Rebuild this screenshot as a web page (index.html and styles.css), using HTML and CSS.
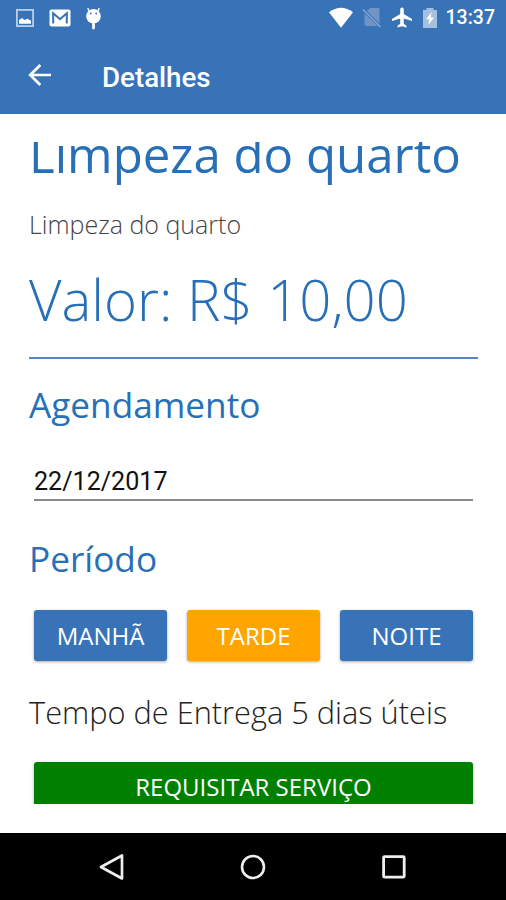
FILE: index.html
```html
<!DOCTYPE html>
<html lang="pt-BR">
<head>
  <meta charset="UTF-8" />
  <meta name="viewport" content="width=device-width, initial-scale=1" />
  <title>Detalhes</title>
  <link rel="stylesheet" href="styles.css">
</head>
<body>
  <header class="header">
    <div class="status-bar">
      <svg class="icon-picture" width="18" height="18" viewBox="0 0 18 18">
        <rect x="0.9" y="0.9" width="16.2" height="16.2" fill="none" stroke="#b9cfe8" stroke-width="1.8" />
        <path d="M3 14.8V11L6 9l2.5 2 3-1.2 3.5 2v3z" fill="#fff" />
      </svg>
      <svg class="icon-mail" width="22" height="18" viewBox="0 0 22 18">
        <rect x="0.5" y="0.5" width="21" height="17" rx="2" fill="#fff" />
        <path d="M4.2 14.5V4.2L11 10.2l6.8-6v10.3" fill="none" stroke="#3873b7" stroke-width="2" />
      </svg>
      <svg class="icon-bug" width="17" height="23" viewBox="0 0 17 23">
        <path d="M4 4L2.8 1M13 4l1.2-3" stroke="#fff" stroke-width="1.4" />
        <circle cx="8.5" cy="9.3" r="7.3" fill="#fff" />
        <path d="M8.5 15v6" stroke="#fff" stroke-width="2.8" stroke-linecap="round" />
        <circle cx="5.8" cy="6.5" r="0.9" fill="#3873b7" />
        <circle cx="11.2" cy="6.5" r="0.9" fill="#3873b7" />
      </svg>
      <div class="spacer"></div>
      <svg class="icon-wifi" width="26" height="22" viewBox="0 0 26 22">
        <path d="M1 5.3Q13-3.8 25 5.3L13 20.8z" fill="#fff" />
      </svg>
      <svg class="icon-sim" width="20" height="22" viewBox="0 0 20 22">
        <path d="M8 1h9.5v15.5L5 4zM2.5 6.5L15.5 19H4.5a2 2 0 0 1-2-2z" fill="#7094c4" />
        <path d="M1 2.5L18.5 20" stroke="#7da3d0" stroke-width="1.7" />
      </svg>
      <svg class="icon-plane" width="22" height="22" viewBox="0 0 22 22">
        <path d="M21 14v-2.1l-8.2-5V2.4a1.8 1.8 0 0 0-3.6 0v4.5L1 11.9V14l8.2-2.4v5.2l-2.7 2v1.7l4.5-1.2 4.5 1.2v-1.7l-2.7-2v-5.2z" fill="#fff" />
      </svg>
      <svg class="icon-battery" width="14" height="22" viewBox="0 0 14 22">
        <path d="M0 3h3.5V1h7v2H14v18H0z" fill="#a5c0df" />
        <path d="M8.7 5L3 12.2h3.4L5.3 18 11 10.5H7.7z" fill="#fff" />
      </svg>
      <span class="clock">13:37</span>
    </div>
    <div class="toolbar">
      <svg class="icon-back" width="24" height="24" viewBox="0 0 24 24">
        <path d="M23 12H2.5M12.3 2L2.2 12l10.1 10" fill="none" stroke="#fff" stroke-width="2.7" />
      </svg>
      <span class="page-title">Detalhes</span>
    </div>
  </header>

  <main class="content">
    <h1 class="name">Limpeza do quarto</h1>
    <p class="description">Limpeza do quarto</p>
    <p class="price">Valor: R$ 10,00</p>
    <hr class="divider" />

    <h2 class="section-title">Agendamento</h2>
    <div class="date-input">22/12/2017</div>

    <h2 class="section-title period-title">Período</h2>
    <div class="periods">
      <button class="btn">MANHÃ</button>
      <button class="btn selected">TARDE</button>
      <button class="btn">NOITE</button>
    </div>

    <p class="delivery">Tempo de Entrega 5 dias úteis</p>
    <button class="btn submit">REQUISITAR SERVIÇO</button>
  </main>

  <nav class="nav-bar">
    <svg width="28" height="28" viewBox="0 0 28 28">
      <path d="M24 2.5v23L3 14z" fill="none" stroke="#eee" stroke-width="2.7" stroke-linejoin="round" />
    </svg>
    <svg width="28" height="28" viewBox="0 0 28 28">
      <circle cx="14" cy="14" r="11" fill="none" stroke="#eee" stroke-width="2.6" />
    </svg>
    <svg width="28" height="28" viewBox="0 0 28 28">
      <rect x="3.6" y="3.6" width="20.6" height="20.6" rx="1" fill="none" stroke="#eee" stroke-width="2.8" />
    </svg>
  </nav>
</body>
</html>
```
FILE: styles.css
```css
* {
  box-sizing: border-box;
}
body {
  margin: 0;
  height: 900px;
  display: flex;
  flex-direction: column;
  background: #fff;
  font-family: "Open Sans", sans-serif;
  overflow: hidden;
}
h1, h2, p {
  margin: 0;
  white-space: nowrap;
}
svg {
  display: block;
  flex: none;
}

/* Header */
.header {
  height: 114px;
  flex: none;
  background: #3873b7;
  color: #fff;
  font-family: Roboto, sans-serif;
  font-weight: 500;
}
.status-bar {
  display: flex;
  align-items: center;
  height: 36px;
  padding: 0 11px 0 16px;
}
.icon-mail {
  margin-left: 15px;
}
.icon-bug {
  margin-left: 14px;
}
.spacer {
  flex: 1;
}
.icon-sim {
  margin-left: 8px;
}
.icon-plane {
  margin-left: 9px;
}
.icon-battery {
  margin-left: 10px;
}
.clock {
  margin-left: 9px;
  font-size: 19.5px;
  line-height: 38px;
}
.toolbar {
  display: flex;
  align-items: center;
  height: 78px;
  padding: 0 0 1px 28px;
}
.page-title {
  margin-left: 50px;
  padding-top: 5px;
  font-size: 27.7px;
}

/* Content */
.content {
  height: 662px;
  margin-top: 28px;
  padding: 0 28px 0 29px;
  flex: none;
  overflow: hidden;
  color: #276fb6;
}
.name {
  margin-top: -18px;
  font-size: 49.2px;
  line-height: 60px;
  font-weight: 400;
}
.description {
  margin-top: 23px;
  font-size: 25px;
  line-height: 34px;
  font-weight: 300;
  color: #444;
}
.price {
  margin-top: 20px;
  font-size: 56.3px;
  line-height: 76px;
  font-weight: 300;
}
.divider {
  height: 2px;
  margin: 20px 0 21px;
  border: none;
  background: #5785bd;
}
.section-title {
  font-size: 35.2px;
  line-height: 48px;
  font-weight: 400;
}
.date-input {
  height: 34px;
  margin: 39px 5px 0;
  border-bottom: 2px solid #8a8a8a;
  color: #111;
  font-family: Roboto, sans-serif;
  font-size: 25.1px;
  line-height: 30px;
}
.period-title {
  margin-top: 33px;
}
.periods {
  display: grid;
  grid-template-columns: repeat(3, 1fr);
  gap: 20px;
  margin: 28px 5px 0;
}
.btn {
  height: 51px;
  padding: 0;
  border: none;
  border-radius: 3px;
  background: #3873b7;
  color: #fff;
  font-family: inherit;
  font-size: 24px;
  box-shadow: 0 1px 3px rgba(0, 0, 0, 0.35);
}
.selected {
  background: #ffa500;
}
.delivery {
  margin-top: 31px;
  font-size: 30.75px;
  line-height: 40px;
  font-weight: 300;
  color: #222;
}
.submit {
  display: block;
  width: 439px;
  height: 49px;
  margin: 30px 5px 0;
  background: #008000;
}

/* Android navigation */
.nav-bar {
  display: flex;
  justify-content: center;
  align-items: center;
  gap: 113px;
  height: 67px;
  margin-top: auto;
  background: #000;
}
```
